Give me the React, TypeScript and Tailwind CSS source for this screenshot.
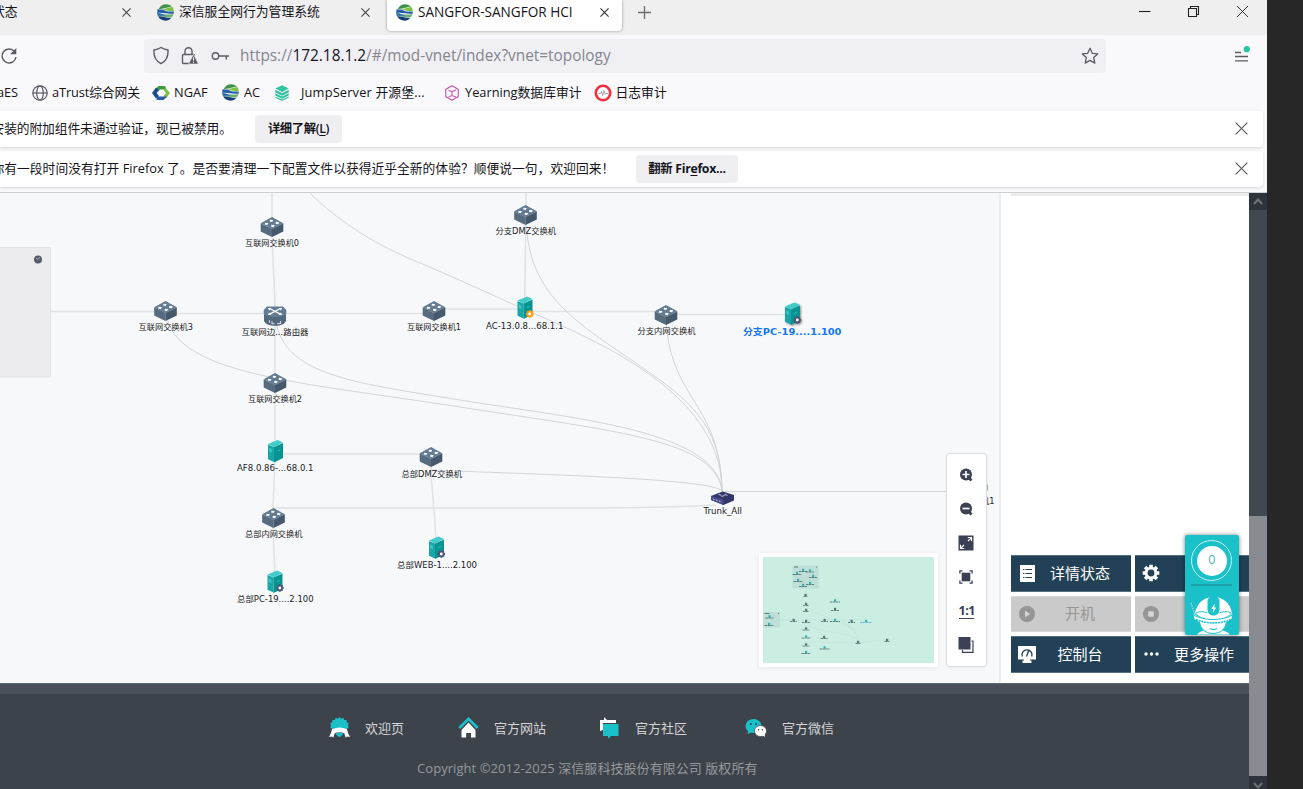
import React from "react";

const UI = "font-['Open_Sans','Noto_Sans_CJK_SC',sans-serif]";

/* ---------- small browser icons ---------- */

function SangforIcon() {
  return (
    <svg width="17" height="17" viewBox="0 0 17 17" className="shrink-0">
      <path d="M1.800 4.900C3 2 5.800 .2 9 .2c2.700 0 4.800 1 6 2.600C11 2.600 8 5.200 1.800 4.900z" fill="#3f9248" />
      <path d="M5.500 5.500c3.500-.2 5-2.200 9.900-2.400 1 1.200 1.400 2.600 1.400 4-4 .3-7-.6-11.300-1.600z" fill="#7cc142" />
      <path d="M.5 5.300c2 .3 3.200 0 5.200.2 2.500 1.400 4.300 2.400 11 2v2.200C10 10.400 6 8.200 .2 9z" fill="#245ea8" />
      <path d="M.3 9.200c3.600-.4 5.600 1.400 10 1.400 2 0 4-.2 6.200-.6-.4 1.300-1 2.400-1.900 3.400C9 14 5 11.900 .9 12.100z" fill="#6fae78" />
      <path d="M.2 9c3.600 0 5.600 2 9.400 2.200C6 12 3.500 11.500 .8 11.800z" fill="#2e6fae" />
      <path d="M1.100 12.300c4-.3 7 1.600 12.900 1.600-1.200 1.700-3.200 2.800-5.500 2.800-3.300 0-5.900-1.500-7.400-4.400z" fill="#173f78" />
    </svg>
  );
}

function Cross({ size, color, w = 1.1 }: { size: number; color: string; w?: number }) {
  return (
    <svg width={size} height={size} viewBox="0 0 10 10" className="shrink-0">
      <path d="M.5 .5l9 9M9.500 .5l-9 9" stroke={color} strokeWidth={(w * 10) / size} fill="none" />
    </svg>
  );
}

function TabBar() {
  return (
    <div className="flex h-[35px] shrink-0 overflow-hidden bg-[#efefef] text-[12.8px] text-[#15141a]">
      <div className="flex h-6 w-[157px] items-center">
        <span className="-ml-[8px] w-[130px] whitespace-nowrap">状态</span>
        <Cross size={9} color="#444" />
      </div>
      <div className="flex h-6 w-[230px] items-center">
        <SangforIcon />
        <span className="ml-[5px] w-[182px] whitespace-nowrap">深信服全网行为管理系统</span>
        <Cross size={9} color="#444" />
      </div>
      <div className="h-[31px] w-[235px] rounded-b bg-white shadow-[0_0_3px_rgba(0,0,0,0.4)]">
        <div className="flex h-6 items-center pl-[9px]">
          <SangforIcon />
          <span className="ml-[5px] w-[182px] whitespace-nowrap text-[13.6px]">SANGFOR-SANGFOR HCI</span>
          <Cross size={9} color="#333" />
        </div>
      </div>
      <div className="flex h-6 flex-1 items-center pl-[16px]">
        <svg width="13" height="13" viewBox="0 0 13 13">
          <path d="M6.500 0v13M0 6.500h13" stroke="#6b6b70" strokeWidth="1.300" />
        </svg>
      </div>
      <div className="flex h-[23px] w-[129px] items-center">
        <svg width="112" height="13" viewBox="0 0 112 13" fill="none" stroke="#222" strokeWidth="1.100">
          <path d="M1 6.500h11.500" />
          <path d="M50.500 3.500h8v8h-8zM52.500 3V1.500h8v8h-1.500" />
          <path d="M99 1l11 11M110 1l-11 11" strokeWidth=".9" />
        </svg>
      </div>
    </div>
  );
}

function Toolbar() {
  return (
    <div className="flex h-[41px] shrink-0 items-center">
      <div className="w-[144px]">
        <svg width="18" height="18" viewBox="0 0 18 18" fill="none" stroke="#5b5b66" strokeWidth="1.500">
          <path d="M14.500 4.500A7 7 0 1 0 16 10" />
          <path d="M16.300 1v6.200h-6.200z" fill="#5b5b66" stroke="none" />
        </svg>
      </div>
      <div className="flex h-[34px] w-[962px] items-center rounded bg-[#f0f0f4] pl-[9px]">
        <svg width="77" height="20" viewBox="0 0 77 20" fill="none" stroke="#5b5b66" strokeWidth="1.400">
          <path d="M8 1.500C10.500 3 12.500 3.700 15 4c.4 6-1.500 11-7 13.700C2.500 15 .6 10 1 4c2.500-.3 4.500-1 7-2.500z" />
          <path d="M37 17.500h-6.500a1 1 0 0 1-1-1V9.500a1 1 0 0 1 1-1h10a1 1 0 0 1 1 1M32 8.500V5.200a3.500 3.500 0 0 1 7 0v3.300" />
          <path d="M40.500 8.300l5 9.700h-10z" fill="#5b5b66" stroke="#f0f0f4" strokeWidth=".6" />
          <path d="M40.500 11.500v3.300M40.500 15.700v1.100" stroke="#fff" strokeWidth="1" />
          <circle cx="62.500" cy="10" r="3.200" />
          <path d="M65.700 10H76M73.300 10v3.500" />
        </svg>
        <span className="ml-[10px] w-[841px] whitespace-nowrap text-[15.38px] text-[#85858c]">
          https://<span className="text-[#15141a]">172.18.1.2</span>/#/mod-vnet/index?vnet=topology
        </span>
        <svg width="18" height="18" viewBox="0 0 18 18" fill="none" stroke="#5b5b66" strokeWidth="1.300" strokeLinejoin="round">
          <path d="M9 1.300l2.300 5 5.400.6-4 3.700 1.100 5.500L9 13.400l-4.800 2.700 1.100-5.500-4-3.700 5.400-.6z" />
        </svg>
      </div>
      <div className="flex flex-1 justify-end pr-[17px]">
        <svg width="16" height="19" viewBox="0 0 16 19" fill="none" stroke="#5b5b66" strokeWidth="1.300">
          <path d="M1 6.500h6M1 10.500h13M1 14.800h13" />
          <circle cx="12.800" cy="3.200" r="3.100" fill="#2ac3a2" stroke="none" />
        </svg>
      </div>
    </div>
  );
}

function Bookmarks() {
  return (
    <div className="flex h-[33px] shrink-0 items-center text-[12.8px] whitespace-nowrap text-[#15141a]">
      <span className="-ml-[3px] w-[35px] tracking-[-0.1px]">aES</span>
      <div className="flex w-[120px] items-center gap-[4px]">
        <svg width="16" height="16" viewBox="0 0 16 16" fill="none" stroke="#5b5b66" strokeWidth="1.200" className="shrink-0">
          <circle cx="8" cy="8" r="7.200" />
          <ellipse cx="8" cy="8" rx="3.300" ry="7.200" />
          <path d="M.8 8h14.400" />
        </svg>
        <span className="tracking-[-0.12px]">aTrust综合网关</span>
      </div>
      <div className="flex w-[70px] items-center gap-[4px]">
        <svg width="18" height="16" viewBox="0 0 18 16" className="shrink-0">
          <path d="M3 4.500L6.500 1h6.500L14.500 4.500H8L5.500 7z" fill="#3a9a3c" />
          <path d="M13.500 3L18 8l-4 5.500-2.500-2.500L14 8l-2.500-3z" fill="#7fc23f" />
          <path d="M15 11.500L11.500 15h-7L5 11.500h7z" fill="#2b5aa6" />
          <path d="M4 2.500L0 8l4 5.500L7 11 4.700 8 7 4.700z" fill="#1d4a92" />
        </svg>
        <span>NGAF</span>
      </div>
      <div className="flex w-[52px] items-center gap-[5px]">
        <SangforIcon />
        <span>AC</span>
      </div>
      <div className="flex w-[170px] items-center gap-[11px]">
        <svg width="16" height="16" viewBox="0 0 16 16" className="shrink-0">
          <path d="M8 .3l6.700 3.300L8 7 1.300 3.600z" fill="#2cc5a0" />
          <path d="M1.300 4.800L8 8l6.700-3.200v2.600L8 10.700 1.300 7.400z" fill="#3fbf9f" />
          <path d="M1.300 8.200L8 11.400l6.700-3.200v2.400L8 13.800l-6.700-3.200z" fill="#2cc5a0" />
          <path d="M1.300 11.400L8 14.500l6.700-3.100v1.300L8 16l-6.700-3.300z" fill="#3fbf9f" />
        </svg>
        <span className="tracking-[0.17px]">JumpServer 开源堡...</span>
      </div>
      <div className="flex w-[150px] items-center gap-[5px]">
        <svg width="16" height="16" viewBox="0 0 16 16" fill="none" stroke="#c95fb5" strokeWidth="1.200" className="shrink-0">
          <path d="M8 .8l6.300 3.600v7.200L8 15.200 1.700 11.600V4.400z" />
          <path d="M4.500 5.500L8 6.500l4-1.500M8 6.500v4M4.500 12L8 10.500l4 1.500" />
        </svg>
        <span>Yearning数据库审计</span>
      </div>
      <div className="flex items-center gap-[4px]">
        <svg width="18" height="18" viewBox="0 0 18 18" fill="none" className="shrink-0">
          <circle cx="9" cy="9" r="7.200" fill="#fff" stroke="#f3303c" strokeWidth="2.600" />
          <path d="M4.500 9.500h2l1-2 1.200 4L10 6.500l1.200 4 .8-1h2" stroke="#8a93a5" strokeWidth=".8" />
        </svg>
        <span className="-ml-[0.500px]">日志审计</span>
      </div>
    </div>
  );
}

function Notices() {
  return (
    <div className="flex h-[82px] shrink-0 flex-col gap-[4px] overflow-hidden pt-[2px] pr-1 text-[12.75px] whitespace-nowrap text-[#15141a]">
      <div className="flex h-[36px] shrink-0 items-center rounded-r bg-white pr-[15px] shadow-[0_1px_3px_rgba(0,0,0,0.14)]">
        <span className="-ml-[8.500px] w-[263.5px] tracking-[-0.1px]">安装的附加组件未通过验证，现已被禁用。</span>
        <button className="h-7 w-[87px] rounded bg-[#efeff2] text-[12.3px] font-semibold tracking-[-0.35px]">
          详细了解(<span className="underline underline-offset-2">L</span>)
        </button>
        <span className="flex-1" />
        <span className="-mt-[2px]">
          <Cross size={13} color="#5b5b66" w={1.2} />
        </span>
      </div>
      <div className="flex h-[36px] shrink-0 items-center rounded-r bg-white pr-[15px] shadow-[0_1px_3px_rgba(0,0,0,0.14)]">
        <span className="-ml-[8.500px] w-[644.5px] tracking-[0.03px]">
          你有一段时间没有打开 Firefox 了。是否要清理一下配置文件以获得近乎全新的体验？顺便说一句，欢迎回来！
        </span>
        <button className="h-7 w-[102px] rounded bg-[#efeff2] text-[12.300px] font-bold tracking-[-0.3px]">
          翻新 Fir<span className="underline underline-offset-2">e</span>fox...
        </button>
        <span className="flex-1" />
        <span className="-mt-[2px]">
          <Cross size={13} color="#5b5b66" w={1.2} />
        </span>
      </div>
    </div>
  );
}

/* ---------- topology ---------- */

function Switch({ x, y }: { x: number; y: number }) {
  return (
    <g transform={`translate(${x} ${y})`}>
      <path d="M-11.300 -3.800L0 2v8L-11.300 4.500z" fill="#566b80" />
      <path d="M11.300 -3.800L0 2v8L11.300 4.500z" fill="#46586c" />
      <path d="M0 -10L11.300 -3.800 0 2.200 -11.300 -3.800z" fill="#647c93" />
      <g fill="#fff">
        <path d="M-2 -7.300l3.200 .3-1 2-2.600-.6zM4 -5.200l3.400 .6-1.400 1.900-2.600-.6zM-6.800 -4.300l3.400 .5-1.400 1.900-2.600-.5zM-.4 -2.200l3.200 .5-1.300 1.900-2.600-.6z" />
      </g>
    </g>
  );
}

function Router({ x, y }: { x: number; y: number }) {
  return (
    <g transform={`translate(${x} ${y})`}>
      <path d="M-11 -4v8.500C-10 11.500 10 11.500 11 4.500V-4z" fill="#53687d" />
      <path d="M-8 -9.500H8L11.300 -6v4C8 2-8 2-11.300 -2v-4z" fill="#647c93" />
      <path d="M-5.500 -7.500L5.500 -1.800M5.500 -7.500L-5.500 -1.800" stroke="#fff" strokeWidth="1.300" />
      <path d="M-7 -8h3.500L-6 -5.500zM7 -8H3.500L6 -5.500zM-7 -1h3.500L-6 -3.500zM7 -1H3.500L6 -3.500z" fill="#fff" />
      <path d="M-5.500 4.300v2.400M-3 5.200v2.500h2.500M2 7.500h3.500V5" stroke="#d6dde4" strokeWidth="1.100" fill="none" />
    </g>
  );
}

function Server({ x, y, badge }: { x: number; y: number; badge?: string }) {
  return (
    <g transform={`translate(${x} ${y})`}>
      <path d="M-7.500 -6.500L-1.500 -4V11L-7.500 8.300z" fill="#16a6a5" />
      <path d="M-1.500 -4L7.500 -8V7L-1.500 11.500z" fill="#079391" />
      <path d="M-7.500 -7L2 -11 7.500 -8.500 -1.500 -4z" fill="#41cccb" />
      <path d="M-6.300 -3l2.600 1.100v3.600l-2.600-1.100z" fill="#3fc6c5" />
      <path d="M-5.500 4l1.200 .5M1.500 .5l1.500-1.500 .5 1 1.300-1.500" stroke="#2bb8b5" strokeWidth=".9" fill="none" />
      {badge && (
        <g transform="translate(4.800 6.500)">
          <path
            d="M0 -3.800v7.600M-3.800 0h7.600M-2.700 -2.700l5.400 5.400M2.700 -2.700l-5.400 5.400"
            stroke={badge}
            strokeWidth="1.900"
          />
          <circle r="2.300" fill="#fff" stroke={badge} strokeWidth="1.700" />
        </g>
      )}
    </g>
  );
}

type NodeDef = {
  kind: "switch" | "router" | "server";
  x: number;
  y: number;
  label: string;
  ly: number;
  lx: number;
  w: number;
  badge?: string;
};

const SLATE = "#4d567d";
const ORANGE = "#ff9c12";

const nodes: NodeDef[] = [
  { kind: "switch", x: 272, y: 227, label: "互联网交换机0", lx: 245, ly: 246, w: 54 },
  { kind: "switch", x: 525.5, y: 215, label: "分支DMZ交换机", lx: 495.500, ly: 234, w: 60.500 },
  { kind: "switch", x: 165.500, y: 311, label: "互联网交换机3", lx: 138.500, ly: 329.500, w: 54.500 },
  { kind: "router", x: 275, y: 316, label: "互联网边...路由器", lx: 241.500, ly: 335, w: 67 },
  { kind: "switch", x: 434, y: 311, label: "互联网交换机1", lx: 407, ly: 329.500, w: 54 },
  { kind: "server", x: 525, y: 307.500, label: "AC-13.0.8...68.1.1", lx: 486, ly: 328.500, w: 77.500, badge: ORANGE },
  { kind: "switch", x: 666, y: 315, label: "分支内网交换机", lx: 637.500, ly: 334, w: 58 },
  { kind: "switch", x: 275, y: 383, label: "互联网交换机2", lx: 248, ly: 402, w: 54 },
  { kind: "server", x: 275.500, y: 451, label: "AF8.0.86-...68.0.1", lx: 237, ly: 471, w: 76.500 },
  { kind: "switch", x: 431, y: 457, label: "总部DMZ交换机", lx: 401.500, ly: 476.500, w: 60.500 },
  { kind: "switch", x: 273.500, y: 518, label: "总部内网交换机", lx: 245, ly: 537, w: 57.500 },
  { kind: "server", x: 436.500, y: 547.500, label: "总部WEB-1....2.100", lx: 397, ly: 567.500, w: 80, badge: SLATE },
  { kind: "server", x: 275, y: 581.500, label: "总部PC-19....2.100", lx: 237, ly: 602, w: 76.500, badge: SLATE },
];

const edges = [
  "M272 193V227C272 260 275 280 275 315V451C275 480 273 490 273 518C273 545 275 560 275 582",
  "M51 311.500H165M165 313.500H434M434 309H525V311.500H666",
  "M526 193V215L524.500 308",
  "M275 454H431M431 457C431 500 436 510 436 548",
  "M666 314.500H793",
  "M273 508H560C620 508 670 508 716 505",
];

const thinEdges = [
  "M310 193C335 218 370 242 413 260S490 294 519 307C590 338 722 390 722 491",
  "M526 215C526 290 570 318 627 357S722 420 722 491",
  "M666 315C668 400 720 400 722 491",
  "M166 312C172 375 300 382 460 407S715 440 722 491",
  "M275 315C280 375 350 382 460 400S718 430 722 491",
  "M431 470C520 474 712 478 722 491",
  "M722 491.500H947",
];

function Topology() {
  return (
    <svg
      width="1000"
      height="490"
      viewBox="0 193 1000 490"
      className="block shrink-0 font-['DejaVu_Sans','Noto_Sans_CJK_SC',sans-serif] text-[8.3px]"
    >
      <rect x="-2" y="247.500" width="52.500" height="129.500" fill="#ecebf0" stroke="#e1e2e6" />
      <circle cx="38" cy="259.500" r="4" fill="#565d6d" />
      <path d="M36 258l2 1.500 2-2.500" stroke="#a9adb7" strokeWidth=".9" fill="none" />
      <g fill="none" stroke="#e0e2e5" strokeWidth="1.500">
        {edges.map((d) => (
          <path key={d} d={d} />
        ))}
      </g>
      <g fill="none" stroke="#d4d5db" strokeWidth="1">
        {thinEdges.map((d) => (
          <path key={d} d={d} />
        ))}
      </g>
      {nodes.map((n) => (
        <g key={n.label}>
          {n.kind === "switch" && <Switch x={n.x} y={n.y} />}
          {n.kind === "router" && <Router x={n.x} y={n.y} />}
          {n.kind === "server" && <Server x={n.x} y={n.y} badge={n.badge} />}
          <text x={n.lx} y={n.ly} textLength={n.w} lengthAdjust="spacingAndGlyphs" fill="#222">
            {n.label}
          </text>
        </g>
      ))}
      <g className="drop-shadow-[1px_1px_1px_rgba(0,0,0,0.45)]">
        <Server x={792.500} y={313.500} badge={SLATE} />
      </g>
      <text
        x="743"
        y="335"
        textLength="98.500"
        lengthAdjust="spacingAndGlyphs"
        fill="#1677ee"
        fontWeight="700"
        className="text-[9.5px]"
      >
        分支PC-19....1.100
      </text>
      <g transform="translate(722.500 498)">
        <path d="M-11.500 -2L0 -6.500 11.500 -3V2.500L1 7-11.500 2z" fill="#33366b" />
        <path d="M-11.500 -2L1 1.500V7L-11.500 2z" fill="#4a4e86" />
        <path d="M-4 -3.500l3 .8M2 -3.500l3 .8M-1 -1.500l3-1M-9.500 1l1.500 .6M-6.500 2l1.500 .6M-3.500 3l1.500 .6" stroke="#c9cbe4" strokeWidth="1" />
      </g>
      <text x="703.500" y="514" textLength="38.500" lengthAdjust="spacingAndGlyphs" fill="#222">
        Trunk_All
      </text>
      <rect x="984.500" y="484.500" width="3" height="6" fill="#566b80" />
      <text x="981" y="503.500" textLength="13.500" lengthAdjust="spacingAndGlyphs" fill="#222">
        机1
      </text>
    </svg>
  );
}

/* x, y, label width, 0 = slate, 1 = teal, 2 = selected */
const dots: [number, number, number, number][] = [
  [797, 574, 9, 1], [803, 571, 8, 1], [810, 571.500, 8, 1], [813, 577, 8, 1], [798, 581, 9, 1], [803, 586, 8, 1], [810, 584, 8, 1],
  [805.500, 596, 4, 0], [806, 605, 6, 0], [806, 611, 6, 0], [835, 601.500, 10, 1], [835, 610, 8, 0], [793.500, 621, 7, 0],
  [806, 622, 8, 0], [824.500, 621, 7, 0], [835, 621, 10, 1], [851.500, 622, 7, 0], [866, 622, 12, 2], [806, 629.500, 7, 0],
  [806, 637.500, 9, 1], [824, 638, 7, 0], [806, 645.500, 7, 0], [824.500, 648.500, 10, 1], [806, 653, 9, 1], [858, 643, 5, 0],
  [887, 641, 5, 0], [769.500, 617.500, 8, 1], [769, 625, 9, 1],
];

function MiniMap() {
  return (
    <div className="absolute top-[360px] left-[759px] h-[114px] w-[179px] bg-white p-[4px] shadow-[0_1px_5px_rgba(0,0,0,0.08)]">
      <svg width="171" height="106" viewBox="763 557 171 106" className="block bg-[#cbeee3]">
        <rect x="792.500" y="565.500" width="26" height="23" fill="#bddfd7" />
        <rect x="763" y="612" width="17" height="15.500" fill="#bddfd7" />
        <path d="M794 567h4M816 567h1M764.500 613.500h5M778 613.500h1" stroke="#45685f" strokeWidth="1" opacity=".8" />
        <path
          d="M806 606C825 622 857 620 858 641M806 622C812 634 850 630 858 641M835 611C837 622 857 625 858 641M806 642.500H858L887 640M780 620H866"
          stroke="#c0e1d8"
          strokeWidth=".6"
          fill="none"
        />
        {dots.map(([x, y, w, t], i) => (
          <g key={i} opacity=".85">
            <rect x={x - 1} y={y - 2.2} width="2.200" height="2.200" fill={t ? "#1fa9a1" : "#3e6263"} />
            <path
              d={`M${x - w / 2} ${y + 0.5}h${w}`}
              stroke={t === 2 ? "#3f9fdc" : "#2e5450"}
              strokeWidth="1"
              strokeDasharray="2.500 .4"
              opacity=".8"
            />
          </g>
        ))}
      </svg>
    </div>
  );
}

const INK = "#3b4055";

function ToolPanel() {
  return (
    <div className="absolute top-[260px] left-[946px] flex h-[214px] w-[41px] flex-col items-center rounded-sm border border-[#dcdde1] bg-white pt-[4px] pr-px shadow-[0_1px_4px_rgba(0,0,0,0.06)]">
      {["+", "-"].map((k) => (
        <div key={k} className="flex h-[34px] items-center">
          <svg width="16" height="16" viewBox="0 0 16 16">
            <circle cx="8" cy="7.500" r="6" fill={INK} />
            <path d="M10.500 10.500l3 3" stroke={INK} strokeWidth="2.600" />
            <path d={k === "+" ? "M4.500 7.500h7M8 4v7" : "M4.500 7.500h7"} stroke="#fff" strokeWidth="1.700" />
          </svg>
        </div>
      ))}
      <div className="flex h-[34px] items-center">
        <svg width="16" height="16" viewBox="0 0 16 16" fill="none" stroke="#fff" strokeWidth="1.200">
          <rect x=".5" y=".5" width="15" height="15" fill={INK} stroke="none" />
          <path d="M10 6l3-3M9.800 2.500h3.700v3.700M6 10l-3 3M2.500 9.800v3.700h3.700" />
        </svg>
      </div>
      <div className="flex h-[34px] items-center">
        <svg width="14" height="14" viewBox="0 0 14 14" fill="none" stroke={INK} strokeWidth="1.300">
          <path d="M3.500 .9H.9v2.600M10.500 .9h2.600v2.600M3.500 13.100H.9v-2.600M10.500 13.100h2.600v-2.600" />
          <rect x="2.700" y="2.700" width="8.600" height="8.600" fill={INK} stroke="none" />
        </svg>
      </div>
      <div className="flex h-[34px] items-center pt-px">
        <span className="h-[15px] w-[15px] border-b-[1.5px] border-[#3b4055] text-center font-['Open_Sans',sans-serif] text-[12.5px] leading-[13px] font-bold tracking-[-0.5px] text-[#3b4055]">
          1:1
        </span>
      </div>
      <div className="flex h-[34px] items-center">
        <svg width="16" height="16" viewBox="0 0 16 16">
          <rect x=".5" y="0" width="12" height="12.500" fill={INK} />
          <path d="M13.500 4h1.500v11.300H4.500V13" stroke={INK} strokeWidth="1.200" fill="none" />
        </svg>
      </div>
    </div>
  );
}

/* ---------- side panel ---------- */

function ActionButton({
  label,
  icon,
  disabled,
  width = "w-[120px]",
}: {
  label: string;
  icon: React.ReactNode;
  disabled?: boolean;
  width?: string;
}) {
  return (
    <button
      className={`flex h-[36.5px] shrink-0 items-center border-t border-b pl-[7px] text-[15px] ${width} ${
        disabled ? "border-[#dadada] bg-[#cacaca] text-[#969696]" : "border-[#55707f] bg-[#234156] text-white"
      }`}
    >
      <span className="flex w-[18px] shrink-0 justify-center">{icon}</span>
      <span className="w-[88px] shrink-0 pb-px text-center whitespace-nowrap">{label}</span>
    </button>
  );
}

function SidePanel() {
  return (
    <div className="-ml-px flex h-[490px] w-[250px] shrink-0 flex-col justify-between overflow-hidden border-l-2 border-[#ebecef] bg-white pb-[10.5px] pl-[10px]">
      <div className="h-[3px] bg-[#ededee]" />
      <div className="flex flex-col gap-[4px]">
        <div className="flex gap-[4px]">
          <ActionButton
            label="详情状态"
            icon={
              <svg width="15" height="17" viewBox="0 0 15 17">
                <rect width="15" height="17" fill="#fff" />
                <path d="M3 4.500h1.500M5.500 4.500H12M3 8.500h1.500M5.500 8.500H12M3 12.500h1.500M5.500 12.500H12" stroke="#234156" strokeWidth="1" />
              </svg>
            }
          />
          <ActionButton
            label=""
            width="w-[138px]"
            icon={
              <svg width="18" height="18" viewBox="-9 -9 18 18" stroke="#fff">
                <path d="M0 -8.300V-5M0 8.300V5M-8.300 0H-5M8.300 0H5M-5.900 -5.900L-4 -4M5.900 5.900L4 4M-5.900 5.900L-4 4M5.900 -5.900L4 -4" strokeWidth="3.600" />
                <circle r="4.900" fill="none" strokeWidth="2.900" />
              </svg>
            }
          />
        </div>
        <div className="flex gap-[4px]">
          <ActionButton
            disabled
            label="开机"
            icon={
              <svg width="16" height="16" viewBox="0 0 16 16">
                <circle cx="8" cy="8" r="8" fill="#969696" />
                <path d="M6 4.700L11.200 8 6 11.300z" fill="#d5d5d5" />
              </svg>
            }
          />
          <ActionButton
            disabled
            label=""
            width="w-[138px]"
            icon={
              <svg width="16" height="16" viewBox="0 0 16 16">
                <circle cx="8" cy="8" r="8" fill="#969696" />
                <rect x="5.200" y="5.200" width="5.600" height="5.600" rx="1" fill="#d8d8d8" />
              </svg>
            }
          />
        </div>
        <div className="flex gap-[4px]">
          <ActionButton
            label="控制台"
            icon={
              <svg width="18" height="17" viewBox="0 0 18 17">
                <path d="M0 0h18v13.500H0zM6 13.500h6v1h1.500V17h-9v-2.500H6z" fill="#fff" />
                <path d="M4.300 10.500a5 5 0 1 1 9.400 0M8.500 10.500l2.200-6" stroke="#234156" strokeWidth="1.300" fill="none" />
              </svg>
            }
          />
          <ActionButton
            label="更多操作"
            width="w-[138px]"
            icon={
              <svg width="15" height="4" viewBox="0 0 15 4" fill="#fff">
                <circle cx="2" cy="2" r="1.700" />
                <circle cx="7.500" cy="2" r="1.700" />
                <circle cx="13" cy="2" r="1.700" />
              </svg>
            }
          />
        </div>
      </div>
    </div>
  );
}

function Assistant() {
  return (
    <div className="absolute top-[342px] left-[1185px] flex h-[100px] w-[53.5px] flex-col items-center rounded-[2px] bg-[#1bc1c8] pt-[5px] shadow-[0_0_4px_rgba(0,0,0,0.5)]">
      <div className="flex size-[41px] shrink-0 items-center justify-center rounded-full border-[1.5px] border-[#c8f4f5]">
        <div className="flex size-[30px] items-center justify-center rounded-full bg-white text-[12.5px] text-[#3fb6be]">0</div>
      </div>
      <div className="mt-[3px] h-[2px] w-[41px] shrink-0 bg-[#1aa3ad]" />
      <svg width="44" height="40" viewBox="0 0 44 40" className="mt-[9px] block shrink-0">
        <path d="M7 39.500c3-3.500 8-5 16-5s14 1.500 17 5z" fill="#fff" />
        <path d="M9.500 25h27c0 8-5 13.500-13.500 13.500S9.500 33 9.500 25z" fill="#fff" stroke="#1bc1c8" strokeWidth="1" />
        <path d="M5 18C7 8 14 2 23.500 2S40 8 42 18c-10 9-27 9-37 0z" fill="#fff" />
        <path d="M3.500 18.500c5 4.500 12 5 20 5s14-.5 19-5l-1 5.500c-5 4-11 5-18 5S9 28 4.500 24z" fill="#fff" />
        <path d="M3.500 20c11 6 28 6 39 0" fill="none" stroke="#1bc1c8" strokeWidth="1" />
        <path d="M6 24.500c10 4.500 25 4.500 35 0" fill="none" stroke="#1bc1c8" strokeWidth="1.600" strokeDasharray="2 .8" />
        <path d="M17.500 6c0-6.500 12-6.500 12 0v8.500c0 8-12 8-12 0z" fill="#1bc1c8" />
        <path d="M24.800 8.500l-3.500 5.500h2l-.6 4 3.500-5.500h-2z" fill="#fff" />
        <path d="M6 18c3-1.500 7-2 11.500 0M29.500 18c4.500-2 8.500-1.500 11.500 0" stroke="#1bc1c8" strokeWidth="1" fill="none" />
        <path d="M1 8l5 14" stroke="#8fe3e5" strokeWidth="1.300" strokeDasharray="1.500 1" />
        <path d="M20 33.500c2 1.200 5 1.200 7 0" stroke="#1bc1c8" strokeWidth="1.200" fill="none" />
      </svg>
    </div>
  );
}

/* ---------- footer ---------- */

function Footer() {
  return (
    <div className="h-[106px] shrink-0 border-t border-[#606970] bg-[#3d434b] text-[13px] text-[#d4d5d6]">
      <div className="h-[10px] bg-[#495059]" />
      <div className="flex h-[47px] items-center pt-[20px] pl-[329px] leading-[26px] whitespace-nowrap">
        <div className="flex w-[129px] items-center gap-[15px]">
          <svg width="21" height="21" viewBox="0 0 21 21">
            <path
              d="M10.500 0l1.600 1.700 2.200-1 .9 2.200 2.400 0 0 2.400 2.200.9-1 2.200 1 2-2 1.500H3.200l-2-1.500 1-2-1-2.200 2.200-.9 0-2.400 2.400 0 .9-2.200 2.200 1z"
              fill="#1bc1c8"
            />
            <path d="M6.500 16.500c2.500-1 5.500-1 8 0l-1.500 2-2.500 1.700L8 18.500z" fill="#1bc1c8" />
            <path
              d="M3 12.200C8 10 13 10 18 12.200l1 3.800 2 4-3-.6-1.300 1.400-1.400-4.600c-3.200-1.400-6.400-1.400-9.600 0l-1.400 4.600L3 19.400 0 20l2-4z"
              fill="#fff"
            />
          </svg>
          <span>欢迎页</span>
        </div>
        <div className="flex w-[141px] items-center gap-[15px]">
          <svg width="21" height="21" viewBox="0 0 21 21">
            <path d="M3.500 13l7-7.500 7 7.500v7.500h-4.500V16h-4.800v4.500H3.500z" fill="#fff" />
            <path d="M1.300 11L10.500 1.800 19.700 11" stroke="#1bc1c8" strokeWidth="2.700" fill="none" />
          </svg>
          <span>官方网站</span>
        </div>
        <div className="flex w-[146px] items-center gap-[15px]">
          <svg width="21" height="22" viewBox="0 0 21 22">
            <path d="M1 3h4V0l3 3h9v3H4v7l-3 1z" fill="#fff" />
            <path d="M4 7h15.500v12H12l-3 2.700V19H4z" fill="#1bc1c8" />
          </svg>
          <span>官方社区</span>
        </div>
        <div className="flex items-center gap-[15px]">
          <svg width="22" height="20" viewBox="0 0 22 20">
            <ellipse cx="8.500" cy="8" rx="8" ry="7" fill="#1bc1c8" />
            <path d="M3 12l-.3 4L7 14z" fill="#1bc1c8" />
            <circle cx="5.800" cy="6" r="1" fill="#234156" />
            <circle cx="11" cy="6" r="1" fill="#234156" />
            <ellipse cx="15.500" cy="13" rx="6" ry="5.500" fill="#fff" stroke="#3d434b" strokeWidth=".7" />
            <path d="M17 17l3 2-.3-3z" fill="#fff" />
            <circle cx="13.600" cy="11.800" r=".8" fill="#3d434b" />
            <circle cx="17.400" cy="11.800" r=".8" fill="#3d434b" />
          </svg>
          <span>官方微信</span>
        </div>
      </div>
      <div className="mt-[17px] pl-[417px] leading-5 tracking-[0.06px] whitespace-nowrap text-[#96999c]">
        Copyright ©2012-2025 深信服科技股份有限公司 版权所有
      </div>
    </div>
  );
}

function Scrollbar() {
  return (
    <div className="flex w-[18px] shrink-0 flex-col bg-[#404850]">
      <div className="flex h-[17px] items-center justify-center bg-[#2d343c]">
        <svg width="10" height="7" viewBox="0 0 10 7" fill="none" stroke="#6f7478" strokeWidth="2">
          <path d="M1 6l4-4.500L9 6" />
        </svg>
      </div>
      <div className="mt-[306px] h-[260px] bg-[#888b90]" />
      <div className="flex flex-1 items-end justify-center bg-[#2e323a]">
        <svg width="10" height="7" viewBox="0 0 10 7" fill="none" stroke="#6c7075" strokeWidth="2">
          <path d="M1 1l4 4.500L9 1" />
        </svg>
      </div>
    </div>
  );
}

export default function App() {
  return (
    <div className={`h-[789px] w-[1303px] overflow-hidden bg-[#272727] ${UI}`}>
      <div className="flex h-full w-[1267px] flex-col bg-[#f9f9fb]">
        <TabBar />
        <Toolbar />
        <Bookmarks />
        <Notices />
        <div className="h-[2px] shrink-0 border-b border-[#cfd0d3]" />
        <div className="flex min-h-0 flex-1">
          <div className="w-[1249px] shrink-0">
            <div className="relative flex bg-[#f7f8fa]">
              <Topology />
              <MiniMap />
              <ToolPanel />
              <SidePanel />
              <Assistant />
            </div>
            <Footer />
          </div>
          <Scrollbar />
        </div>
      </div>
    </div>
  );
}
